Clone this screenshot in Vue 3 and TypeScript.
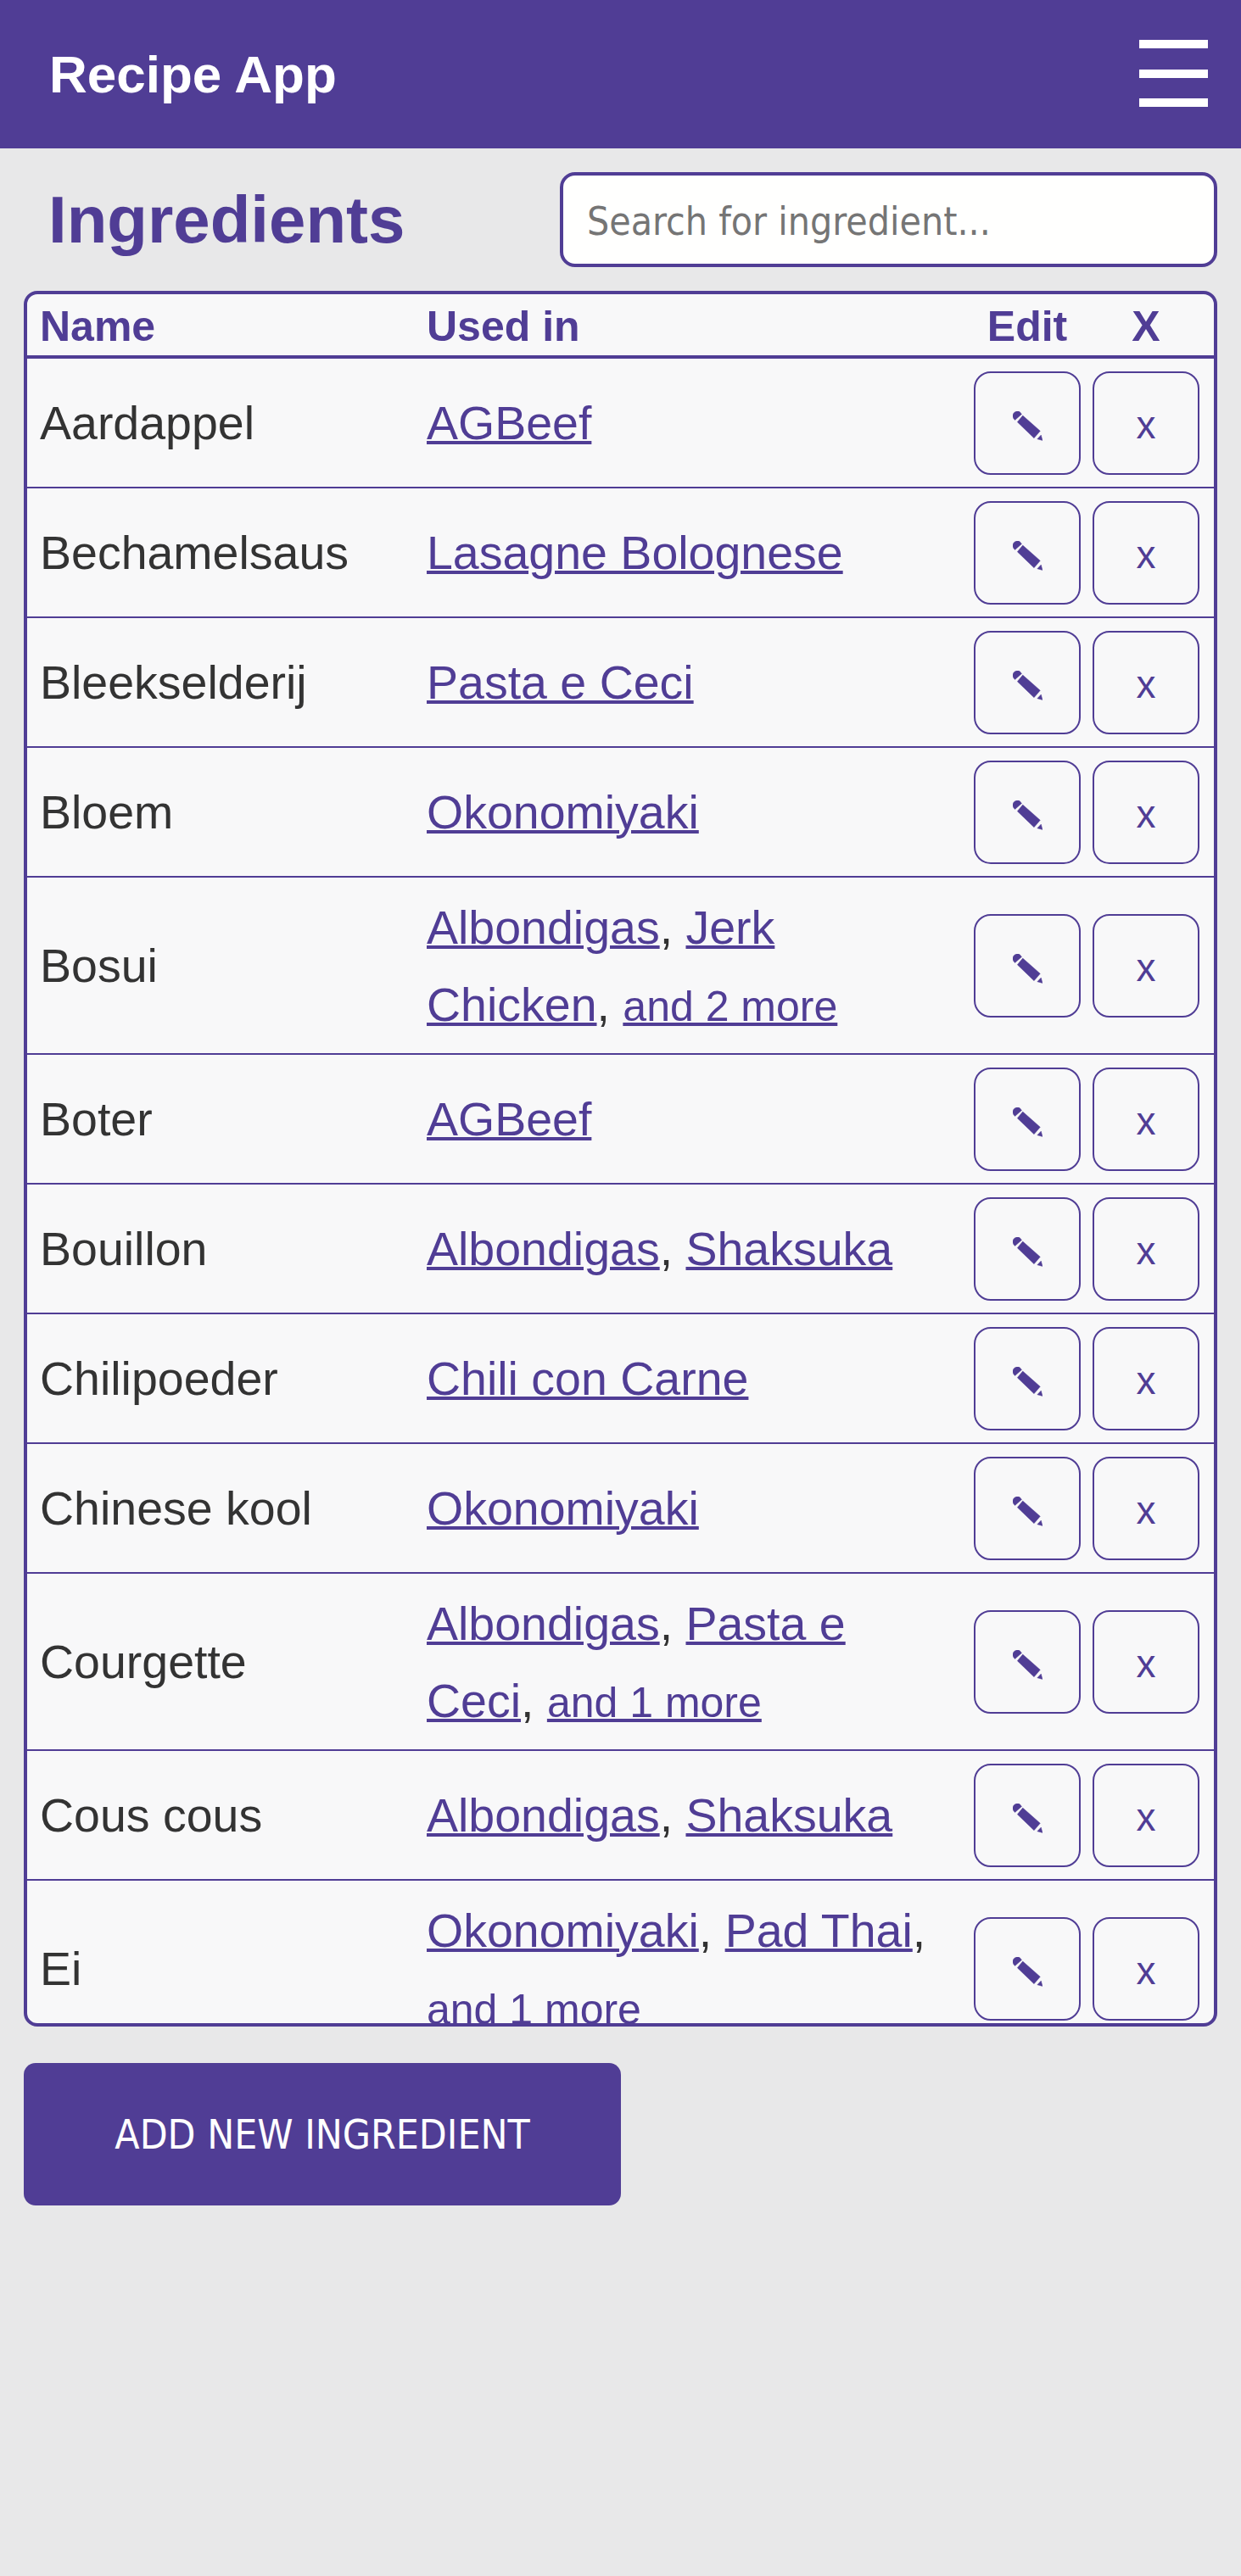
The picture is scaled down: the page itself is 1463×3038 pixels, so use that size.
<script setup lang="ts">
import { ref } from 'vue'

type Ingredient = {
  name: string
  recipes: string[]
  more?: number
}

const search = ref('')

const ingredients: Ingredient[] = [
  { name: 'Aardappel', recipes: ['AGBeef'] },
  { name: 'Bechamelsaus', recipes: ['Lasagne Bolognese'] },
  { name: 'Bleekselderij', recipes: ['Pasta e Ceci'] },
  { name: 'Bloem', recipes: ['Okonomiyaki'] },
  { name: 'Bosui', recipes: ['Albondigas', 'Jerk Chicken'], more: 2 },
  { name: 'Boter', recipes: ['AGBeef'] },
  { name: 'Bouillon', recipes: ['Albondigas', 'Shaksuka'] },
  { name: 'Chilipoeder', recipes: ['Chili con Carne'] },
  { name: 'Chinese kool', recipes: ['Okonomiyaki'] },
  { name: 'Courgette', recipes: ['Albondigas', 'Pasta e Ceci'], more: 1 },
  { name: 'Cous cous', recipes: ['Albondigas', 'Shaksuka'] },
  { name: 'Ei', recipes: ['Okonomiyaki', 'Pad Thai'], more: 1 },
]
</script>

<template>
  <div class="app">
    <header class="topbar">
      <span class="topbar__title">Recipe App</span>
      <button class="burger" type="button" aria-label="Menu">
        <span></span>
        <span></span>
        <span></span>
      </button>
    </header>

    <main class="content">
      <div class="toolbar">
        <h1 class="toolbar__title">Ingredients</h1>
        <input v-model="search" class="search" type="text" placeholder="Search for ingredient..." />
      </div>

      <div class="list">
        <div class="row row--head">
          <div class="cell-name">Name</div>
          <div class="cell-used">Used in</div>
          <div class="cell-btn">Edit</div>
          <div class="cell-btn">X</div>
        </div>
        <div v-for="item in ingredients" :key="item.name" class="row">
          <div class="cell-name">{{ item.name }}</div>
          <div class="cell-used">
            <template v-for="(recipe, i) in item.recipes" :key="recipe">
              <a class="link" href="#">{{ recipe }}</a><template v-if="i < item.recipes.length - 1 || item.more">, </template>
            </template>
            <a v-if="item.more" class="link link--more" href="#">and {{ item.more }} more</a>
          </div>
          <div class="cell-btn">
            <button class="icon-btn" type="button" aria-label="Edit">
              <svg class="pencil" viewBox="0 0 35 35" width="35" height="35">
                <path d="M2.5 10.5.8 8.5C-.8 6.2-.2 2.8 2 1.2 4.2-.6 7-.4 8.5 1L10.5 3.5Z" />
                <path d="M5.3 12.7 11.7 5 32.3 23.3 25 31.7Z" />
                <path d="M28.8 32.8 33.3 28 35 34.4Z" />
              </svg>
            </button>
          </div>
          <div class="cell-btn">
            <button class="icon-btn icon-btn--x" type="button" aria-label="Delete">x</button>
          </div>
        </div>
      </div>

      <button class="add-btn" type="button">ADD NEW INGREDIENT</button>
    </main>
  </div>
</template>

<style>
html,
body {
  margin: 0;
  background: #e8e8e9;
}
</style>

<style scoped>
.app {
  min-height: 3038px;
  background: #e8e8e9;
  font-family: "Liberation Sans", Arial, sans-serif;
  color: #333;
}
.topbar {
  height: 175px;
  box-sizing: border-box;
  padding: 0 39px 0 58px;
  background: #503d95;
  display: flex;
  align-items: center;
  justify-content: space-between;
}
.topbar__title {
  font-size: 62px;
  font-weight: 700;
  color: #fff;
}
.burger {
  width: 81px;
  height: 79px;
  padding: 0;
  border: 0;
  background: transparent;
  display: flex;
  flex-direction: column;
  justify-content: space-between;
  margin-top: -2px;
}
.burger span {
  display: block;
  height: 10px;
  background: #fff;
}
.content {
  padding: 28px 28px 0;
}
.toolbar {
  display: flex;
  align-items: center;
  justify-content: space-between;
  height: 112px;
  margin-bottom: 28px;
}
.toolbar__title {
  margin: 0 0 0 29px;
  font-size: 78px;
  font-weight: 700;
  color: #503d95;
}
.search {
  width: 775px;
  height: 112px;
  box-sizing: border-box;
  padding: 3px 28px 0;
  border: 4px solid #503d95;
  border-radius: 18px;
  background: #fffffe;
  font-family: "DejaVu Sans", sans-serif;
  font-stretch: condensed;
  font-size: 46px;
  outline: none;
}
.search::placeholder {
  color: #757575;
  opacity: 1;
}
.list {
  height: 2047px;
  box-sizing: border-box;
  border: 4px solid #503d95;
  border-radius: 16px;
  background: #f8f8f9;
  overflow: hidden;
}
.row {
  display: flex;
  align-items: center;
  min-height: 153px;
  box-sizing: border-box;
  border-bottom: 2px solid #503d95;
  font-size: 55.5px;
}
.row--head {
  min-height: 76px;
  padding-top: 3px;
  border-bottom-width: 4px;
  font-size: 50px;
  font-weight: 700;
  color: #503d95;
}
.cell-name {
  width: 456px;
  padding-left: 15px;
  box-sizing: content-box;
  flex: none;
}
.cell-used {
  width: 605px;
  margin-right: 33px;
  flex: none;
  line-height: 91px;
  padding: 13.5px 0 11.5px;
}
.row--head .cell-used {
  padding: 0;
  line-height: normal;
}
.cell-btn {
  width: 140px;
  flex: none;
  display: flex;
  justify-content: center;
}
.link {
  color: #503d95;
  text-decoration-thickness: 4px;
}
.link--more {
  font-size: 50px;
  line-height: 0;
}
.icon-btn {
  width: 126px;
  height: 122px;
  box-sizing: border-box;
  padding: 0;
  border: 2px solid #503d95;
  border-radius: 20px;
  background: #f8f8f9;
  color: #503d95;
  font-family: "Liberation Sans", Arial, sans-serif;
  font-size: 46px;
  display: flex;
  align-items: center;
  justify-content: center;
}
.icon-btn--x {
  padding-top: 4px;
}
.pencil {
  fill: #503d95;
  stroke: #503d95;
  stroke-width: 0.4;
  margin-top: 7px;
}
.add-btn {
  display: block;
  width: 704px;
  height: 168px;
  margin-top: 43px;
  border: 0;
  border-radius: 14px;
  background: #503d95;
  color: #fff;
  font-family: "DejaVu Sans", sans-serif;
  font-stretch: condensed;
  font-size: 47.6px;
}
</style>
